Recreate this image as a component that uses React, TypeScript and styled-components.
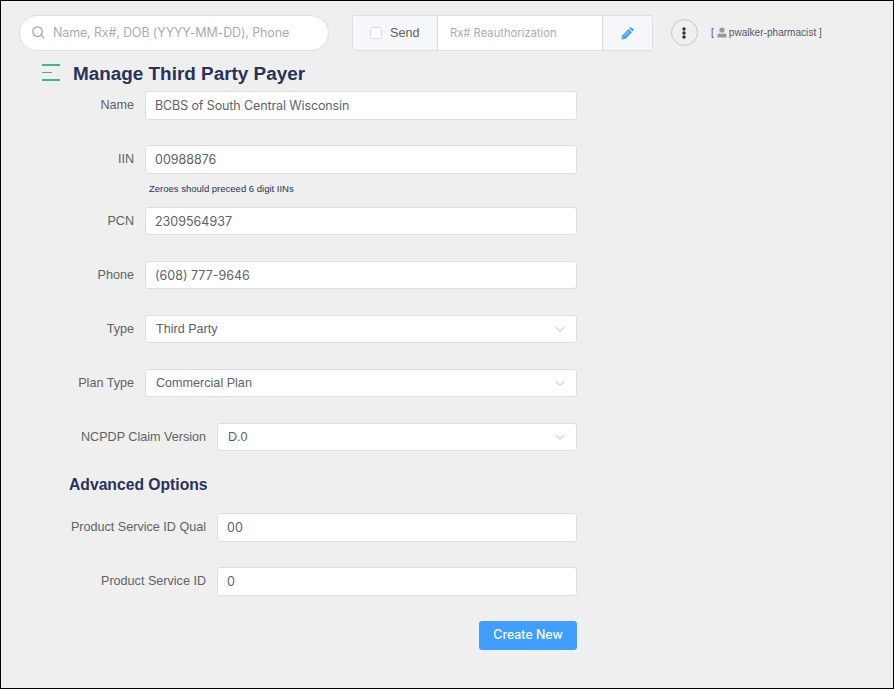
import React from "react";
import styled, { createGlobalStyle } from "styled-components";

const Global = createGlobalStyle`
  * { box-sizing: border-box; }
  body { margin: 0; background: #efefef; }
`;

const sans = `"Liberation Sans", Arial, sans-serif`;
const inter = `Inter, "Liberation Sans", sans-serif`;

const Page = styled.div`
  width: 894px;
  height: 689px;
  border: 1px solid #000;
  background: #efefef;
  font-family: ${sans};
  font-size: 12.6px;
  color: #606266;
  overflow: hidden;
`;

const TopBar = styled.header`
  display: flex;
  align-items: center;
  height: 36px;
  margin: 14px 0 0 18px;
`;

const SearchBox = styled.label`
  display: flex;
  align-items: center;
  width: 310px;
  height: 36px;
  padding: 0 0 1px 12px;
  border: 1px solid #dcdfe6;
  border-radius: 18px;
  background: #fff;
`;

const BareInput = styled.input<{ $size: number; $spacing: number }>`
  flex: 1;
  min-width: 0;
  border: 0;
  outline: 0;
  padding: 0;
  background: transparent;
  color: #606266;
  font-family: ${inter};
  font-size: ${(p) => p.$size}px;
  letter-spacing: ${(p) => p.$spacing}px;
  &::placeholder { color: #a9acb3; opacity: 1; }
`;

const SearchIcon = styled.svg`
  width: 13px;
  height: 13px;
  margin-right: 8px;
`;

const ReauthGroup = styled.div`
  display: flex;
  flex-shrink: 0;
  width: 301px;
  height: 36px;
  margin-left: 23px;
  border: 1px solid #dcdfe6;
  border-radius: 3px;
  background: #fff;
  overflow: hidden;
`;

const SendCell = styled.label`
  display: flex;
  flex: none;
  align-items: center;
  width: 85px;
  padding-left: 17px;
  border-right: 1px solid #dcdfe6;
  background: #f5f7fa;
`;

const Checkbox = styled.span`
  width: 12px;
  height: 12px;
  margin-right: 8px;
  border: 1px solid #dcdfe6;
  border-radius: 2px;
  background: #fff;
`;

const ReauthCell = styled.div`
  display: flex;
  flex: 1;
  min-width: 0;
  padding-left: 12px;
`;

const EditButton = styled.button`
  display: flex;
  flex: none;
  align-items: center;
  justify-content: center;
  width: 50px;
  padding: 0;
  border: 0;
  border-left: 1px solid #dcdfe6;
  background: #f5f7fa;
`;

const MoreButton = styled.button`
  display: flex;
  align-items: center;
  justify-content: center;
  width: 27px;
  height: 27px;
  margin: 0 0 2px 18px;
  padding: 1px 1px 0 0;
  border: 1px solid #c4c4c4;
  border-radius: 50%;
  background: transparent;
`;

const User = styled.div`
  display: flex;
  align-items: center;
  margin: 0 0 1px 13px;
  color: #4c5870;
  font-size: 10px;
  line-height: 14px;
  letter-spacing: 0.04px;
  white-space: pre;
  svg { margin: 0 2px 1px 3px; }
`;

const Heading = styled.div`
  display: flex;
  align-items: center;
  height: 26px;
  margin: 10px 0 4px 41px;
`;

const MenuMark = styled.svg`
  width: 18px;
  height: 18px;
  margin: 0 13px 4px 0;
`;

const Title = styled.h1`
  margin: 0;
  color: #27335a;
  font-size: 18.9px;
  line-height: 24px;
  white-space: nowrap;
`;

const Form = styled.form`
  display: flex;
  flex-direction: column;
  width: 508px;
  margin-left: 68px;
`;

const Row = styled.div<{ $wide?: boolean; $gap?: number }>`
  display: grid;
  grid-template-columns: ${(p) => (p.$wide ? 138 : 66)}px 1fr;
  column-gap: 10px;
  margin-bottom: ${(p) => p.$gap ?? 25}px;
`;

const Label = styled.label`
  justify-self: end;
  line-height: 27px;
  padding: 1px 1px 0 0;
  white-space: nowrap;
`;

const Control = styled.div<{ $height?: number }>`
  display: flex;
  align-items: center;
  height: ${(p) => p.$height ?? 29}px;
  padding: 0 10px 0 9px;
  border: 1px solid #dcdfe6;
  border-radius: 3px;
  background: #fff;
`;

const Value = styled.span`
  flex: 1;
  padding: 0 0 1px 1px;
`;

const Chevron = styled.svg`
  width: 12px;
  height: 12px;
`;

const Hint = styled.div`
  grid-column: 2;
  margin: 8px 0 0 4px;
  height: 14px;
  color: #27335a;
  font-size: 9.5px;
  line-height: 14px;
`;

const Section = styled.h2`
  height: 24px;
  margin: -4px 0 16px;
  color: #27335a;
  font-size: 15.7px;
  line-height: 24px;
`;

const Submit = styled.button`
  align-self: flex-end;
  width: 98px;
  height: 29px;
  padding: 0 0 2px;
  border: 0;
  border-radius: 3px;
  background: #409eff;
  color: #fff;
  font-family: ${inter};
  font-size: 12.4px;
  font-weight: 500;
  letter-spacing: -0.02px;
`;

type FieldProps = {
  label: string;
  value: string;
  wide?: boolean;
  gap?: number;
  height?: number;
  hint?: string;
  spacing?: number;
};

const TextField = ({ label, value, wide, gap, height, hint, spacing = 0 }: FieldProps) => (
  <Row $wide={wide} $gap={gap}>
    <Label>{label}</Label>
    <Control $height={height}>
      <BareInput $size={12.5} $spacing={spacing} defaultValue={value} />
    </Control>
    {hint && <Hint>{hint}</Hint>}
  </Row>
);

const SelectField = ({ label, value, wide, gap = 26 }: FieldProps) => (
  <Row $wide={wide} $gap={gap}>
    <Label>{label}</Label>
    <Control $height={28}>
      <Value>{value}</Value>
      <Chevron viewBox="0 0 12 12" fill="none" stroke="#b8bbc2" strokeWidth="1">
        <path d="M1.5 4 6 8.2 10.5 4" />
      </Chevron>
    </Control>
  </Row>
);

export default function App() {
  return (
    <Page>
      <Global />
      <TopBar>
        <SearchBox>
          <SearchIcon viewBox="0 0 13 13" fill="none" stroke="#a2a5ab" strokeWidth="1.2">
            <circle cx="5.6" cy="5.6" r="4.8" />
            <path d="M9.1 9.1 12.4 12.4" />
          </SearchIcon>
          <BareInput $size={12.5} $spacing={-0.14} placeholder="Name, Rx#, DOB (YYYY-MM-DD), Phone" />
        </SearchBox>
        <ReauthGroup>
          <SendCell>
            <Checkbox />
            Send
          </SendCell>
          <ReauthCell>
            <BareInput $size={11.2} $spacing={0.02} placeholder="Rx# Reauthorization" />
          </ReauthCell>
          <EditButton type="button" aria-label="Edit">
            <svg width="13" height="13" viewBox="0 0 13 13" fill="#409eff">
              <path d="M7.7 2 11 5.3 4.3 12 .5 12.5 1 8.7z" />
              <path d="M8.4 1.3 9.3.5Q10 0 10.7.5L12.5 2.3Q13 3 12.5 3.7L11.7 4.6z" />
              <path d="M3.5 8.9 8.2 4.2" stroke="#d9ebfc" strokeWidth=".8" />
              <path d="M1.5 10.1 2.9 11.5" stroke="#f5f7fa" strokeWidth=".7" />
            </svg>
          </EditButton>
        </ReauthGroup>
        <MoreButton type="button" aria-label="More">
          <svg width="4" height="12" viewBox="0 0 4 12" fill="#222d50">
            <circle cx="2" cy="2" r="1.7" />
            <circle cx="2" cy="6" r="1.7" />
            <circle cx="2" cy="10" r="1.7" />
          </svg>
        </MoreButton>
        <User>
          [
          <svg width="10" height="11" viewBox="0 0 10 11" fill="#999">
            <circle cx="5" cy="3" r="2.6" />
            <path d="M.4 10.4V8.6Q.4 6.6 2.6 6.2 5 7.5 7.4 6.2 9.6 6.6 9.6 8.6V10.4z" />
          </svg>
          pwalker-pharmacist ]
        </User>
      </TopBar>
      <Heading>
        <MenuMark viewBox="0 0 18 18" fill="#42b983">
          <rect y="1" width="18" height="2" />
          <rect y="9" width="10" height="1" />
          <rect y="16" width="18" height="2" />
        </MenuMark>
        <Title>Manage Third Party Payer</Title>
      </Heading>
      <Form>
        <TextField label="Name" value="BCBS of South Central Wisconsin" spacing={-0.11} />
        <TextField label="IIN" value="00988876" hint="Zeroes should preceed 6 digit IINs" gap={11} />
        <TextField label="PCN" value="2309564937" height={28} gap={26} />
        <TextField label="Phone" value="(608) 777-9646" height={28} gap={26} />
        <SelectField label="Type" value="Third Party" />
        <SelectField label="Plan Type" value="Commercial Plan" />
        <SelectField label="NCPDP Claim Version" value="D.0" wide />
        <Section>Advanced Options</Section>
        <TextField label="Product Service ID Qual" value="00" wide />
        <TextField label="Product Service ID" value="0" wide />
        <Submit type="button">Create New</Submit>
      </Form>
    </Page>
  );
}
